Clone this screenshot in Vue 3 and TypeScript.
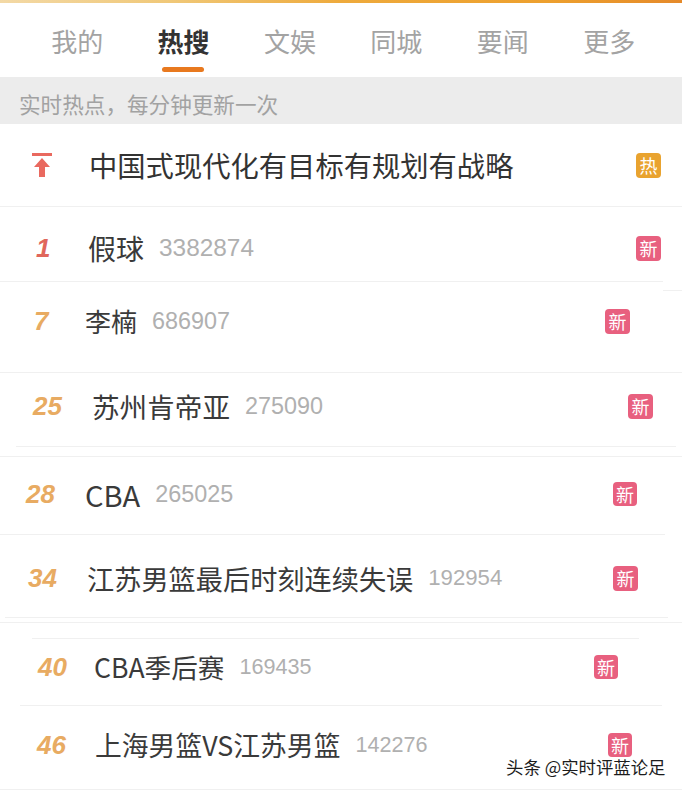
<script setup lang="ts">
interface Rule {
  left: number;
  right: number;
  gap: number;
}

interface HotRow {
  rank: string;
  title: string;
  count: string;
  height: number;
  top: number;
  bottom: number;
  rankLeft: number;
  titleLeft: number;
  end: number;
  titleSize: number;
  countSize: number;
  badgeSize: number;
  rules: Rule[];
}

const tabs = ["我的", "热搜", "文娱", "同城", "要闻", "更多"];
const activeTab = "热搜";

const rows: HotRow[] = [
  { rank: "1", title: "假球", count: "3382874", height: 74, top: 8, bottom: 0, rankLeft: 36, titleLeft: 88, end: 21, titleSize: 28, countSize: 24.4, badgeSize: 25, rules: [{ left: 0, right: 19, gap: 0 }] },
  { rank: "7", title: "李楠", count: "686907", height: 90, top: 0, bottom: 12, rankLeft: 34, titleLeft: 85, end: 52, titleSize: 26, countSize: 23.4, badgeSize: 25, rules: [{ left: 0, right: 0, gap: 0 }] },
  { rank: "25", title: "苏州肯帝亚", count: "275090", height: 73, top: 0, bottom: 7, rankLeft: 33, titleLeft: 92, end: 29, titleSize: 27.6, countSize: 23.4, badgeSize: 25, rules: [{ left: 16, right: 6, gap: 0 }, { left: 0, right: 0, gap: 9 }] },
  { rank: "28", title: "CBA", count: "265025", height: 77, top: 0, bottom: 3, rankLeft: 26, titleLeft: 85, end: 45, titleSize: 29, countSize: 23.4, badgeSize: 24, rules: [{ left: 0, right: 17, gap: 0 }] },
  { rank: "34", title: "江苏男篮最后时刻连续失误", count: "192954", height: 82, top: 4, bottom: 0, rankLeft: 28, titleLeft: 87, end: 44, titleSize: 27.2, countSize: 22.2, badgeSize: 25, rules: [{ left: 5, right: 14, gap: 0 }, { left: 0, right: 0, gap: 4 }, { left: 32, right: 43, gap: 15 }] },
  { rank: "40", title: "CBA季后赛", count: "169435", height: 66, top: 0, bottom: 10, rankLeft: 38, titleLeft: 94, end: 64, titleSize: 26.6, countSize: 21.6, badgeSize: 24, rules: [{ left: 20, right: 20, gap: 0 }] },
  { rank: "46", title: "上海男篮VS江苏男篮", count: "142276", height: 83, top: 0, bottom: 5, rankLeft: 37, titleLeft: 95, end: 50, titleSize: 26.8, countSize: 21.6, badgeSize: 24, rules: [{ left: 0, right: 0, gap: 0 }] },
];

function rowStyle(row: HotRow) {
  return {
    height: `${row.height}px`,
    paddingTop: `${row.top}px`,
    paddingBottom: `${row.bottom}px`,
    paddingLeft: `${row.rankLeft}px`,
    paddingRight: `${row.end}px`,
  };
}

function ruleStyle(rule: Rule) {
  return {
    marginTop: `${rule.gap}px`,
    marginLeft: `${rule.left}px`,
    marginRight: `${rule.right}px`,
  };
}
</script>

<template>
  <div class="page">
    <div class="top-strip"></div>

    <nav class="tabs">
      <div
        v-for="tab in tabs"
        :key="tab"
        class="tab"
        :class="{ active: tab === activeTab }"
      >
        {{ tab }}
      </div>
    </nav>

    <div class="banner">实时热点，每分钟更新一次</div>

    <div class="pinned">
      <svg class="pin-icon" width="20" height="24" viewBox="0 0 20 24">
        <rect x="0" y="0" width="20" height="3" fill="#e9695f" />
        <path d="M10 5 L18 14 H13 V24 H7 V14 H2 Z" fill="#e9695f" />
      </svg>
      <span class="pinned-title">中国式现代化有目标有规划有战略</span>
      <span class="badge hot">热</span>
    </div>
    <div class="rule"></div>

    <template v-for="row in rows" :key="row.rank">
      <div class="row" :style="rowStyle(row)">
        <span
          class="rank"
          :class="{ first: row.rank === '1' }"
          :style="{ width: `${row.titleLeft - row.rankLeft}px` }"
        >{{ row.rank }}</span>
        <span class="title" :style="{ fontSize: `${row.titleSize}px` }">{{ row.title }}</span>
        <span class="count" :style="{ fontSize: `${row.countSize}px` }">{{ row.count }}</span>
        <span
          class="badge fresh"
          :style="{ width: `${row.badgeSize}px`, height: `${row.badgeSize}px` }"
        >新</span>
      </div>
      <div
        v-for="(rule, i) in row.rules"
        :key="i"
        class="rule"
        :style="ruleStyle(rule)"
      ></div>
    </template>

    <div class="rule-stub"></div>
    <div class="watermark">头条 @实时评蓝论足</div>
  </div>
</template>

<style scoped>
.page {
  position: relative;
  width: 682px;
  height: 791px;
  overflow: hidden;
  background: #fff;
  font-family: "Noto Sans CJK SC", "Liberation Sans", sans-serif;
}
.top-strip {
  height: 3px;
  background: linear-gradient(90deg, #f3d9a6 0%, #f0c878 25%, #eeaa3c 50%, #eda02e 80%, #e58a2a 100%);
}
.tabs {
  display: grid;
  grid-template-columns: repeat(6, 106.4px);
  height: 74px;
  padding-left: 24px;
}
.tab {
  position: relative;
  padding-top: 19px;
  text-align: center;
  font-size: 26px;
  line-height: 38px;
  color: #a3a3a3;
}
.tab.active {
  color: #333;
  font-weight: 700;
}
.tab.active::after {
  content: "";
  position: absolute;
  left: 32px;
  bottom: 5px;
  width: 42px;
  height: 5px;
  border-radius: 3px;
  background: #e8791f;
}
.banner {
  height: 47px;
  padding-left: 19px;
  background: #ececec;
  font-size: 21.6px;
  line-height: 54px;
  color: #a2a2a2;
  overflow: hidden;
}
.pinned {
  display: flex;
  align-items: center;
  height: 82px;
  padding: 0 21px 0 32px;
}
.pin-icon {
  flex: none;
  margin-right: 37px;
}
.pinned-title {
  font-size: 28.3px;
  line-height: 40px;
  color: #333;
}
.rule {
  height: 1px;
  background: #f0f0f0;
}
.rule-stub {
  position: absolute;
  right: 0;
  top: 290px;
  width: 19px;
  height: 1px;
  background: #f0f0f0;
}
.row {
  display: flex;
  align-items: center;
  box-sizing: border-box;
}
.rank {
  flex: none;
  font-family: "Liberation Sans", sans-serif;
  font-size: 26px;
  font-style: italic;
  font-weight: 700;
  color: #e8ab62;
}
.rank.first {
  color: #e0675c;
}
.title {
  color: #3a3a3a;
  line-height: 40px;
  white-space: nowrap;
}
.count {
  margin-left: 15px;
  font-family: "Liberation Sans", sans-serif;
  color: #b0b0b0;
}
.badge {
  flex: none;
  display: flex;
  align-items: center;
  justify-content: center;
  margin-left: auto;
  border-radius: 4px;
  font-size: 18px;
  line-height: 1;
  color: #fff;
}
.badge.hot {
  width: 25px;
  height: 25px;
  background: #e9a32f;
}
.badge.fresh {
  background: #e8607f;
}
.watermark {
  position: absolute;
  left: 506px;
  top: 758px;
  font-size: 17.4px;
  line-height: 18px;
  color: #1c1c1c;
  white-space: nowrap;
  text-shadow: 0 0 2px #fff, 0 0 2px #fff, 0 0 3px #fff;
}
</style>
